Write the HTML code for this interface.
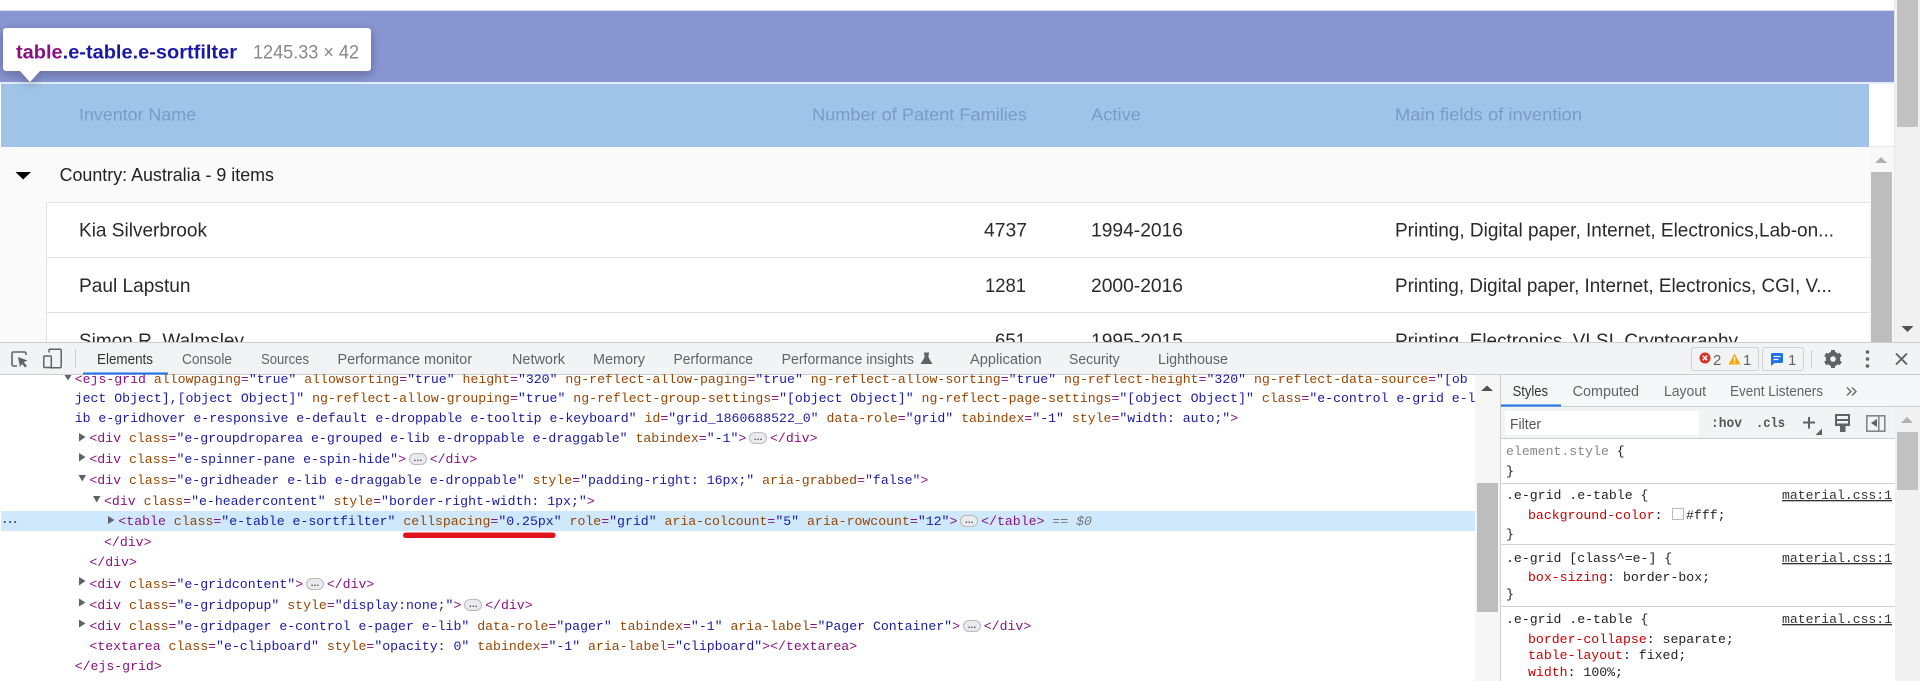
<!DOCTYPE html>
<html><head><meta charset="utf-8"><style>
html,body{margin:0;padding:0;background:#fff}
body{width:1920px;height:681px;overflow:hidden;position:relative;font-family:"Liberation Sans",sans-serif}
svg{position:absolute;left:0;top:0}
.h{font:17.5px "Liberation Sans",sans-serif;fill:#7a9bc2}
.r{font:19.5px "Liberation Sans",sans-serif;fill:#2a2a2a}
.tb{font:15px "Liberation Sans",sans-serif;fill:#5f6368}
#code{position:absolute;left:0;top:374px;width:1475px;height:307px;overflow:hidden}
.l{position:absolute;white-space:pre;font:13.2px/16px "Liberation Mono",monospace;color:#1a1aa6}
.t{color:#881280}.a{color:#994500}.v{color:#1a1aa6}
.p{display:inline-block;width:3ch;height:12px;position:relative;vertical-align:-2px}
.p:before{content:"\2026";position:absolute;left:3px;right:3px;top:0;height:12px;background:#e8eaed;border:1px solid #bbb;border-radius:7px;box-sizing:border-box;font:bold 9px/8px "Liberation Sans",sans-serif;text-align:center;color:#444}
</style></head><body>
<svg width="1920" height="681" viewBox="0 0 1920 681" xmlns="http://www.w3.org/2000/svg">
<defs><filter id="s" x="-10%" y="-30%" width="120%" height="170%"><feDropShadow dx="0" dy="3" stdDeviation="5" flood-color="#223" flood-opacity=".35"/></filter></defs>
<rect x="0" y="10" width="1894" height="1" fill="#d5dbe8"/>
<rect x="0" y="11" width="1894" height="71" fill="#8996d1"/>
<rect x="0" y="82" width="1894" height="2" fill="#e6edf6"/>
<rect x="1" y="84" width="1868" height="63" fill="#a0c4e8"/>
<text class="h" x="79" y="120.5" textLength="117" lengthAdjust="spacingAndGlyphs">Inventor Name</text>
<text class="h" x="812" y="120.5" textLength="215" lengthAdjust="spacingAndGlyphs">Number of Patent Families</text>
<text class="h" x="1091" y="120.5" textLength="50" lengthAdjust="spacingAndGlyphs">Active</text>
<text class="h" x="1395" y="120.5" textLength="187" lengthAdjust="spacingAndGlyphs">Main fields of invention</text>
<rect x="0" y="147" width="1869" height="196" fill="#fafafa"/>
<path d="M15.5 172H31L23.2 179.5Z" fill="#000"/>
<text x="59.6" y="181" font-family="Liberation Sans" font-size="18" fill="#222" textLength="214.4" lengthAdjust="spacingAndGlyphs">Country: Australia - 9 items</text>
<rect x="46" y="202" width="1823" height="141" fill="#fff"/>
<rect x="46" y="202" width="1" height="141" fill="#e0e0e0"/>
<rect x="46" y="202" width="1823" height="1" fill="#e0e0e0"/>
<rect x="46" y="257" width="1823" height="1" fill="#e0e0e0"/>
<rect x="46" y="312" width="1823" height="1" fill="#e0e0e0"/>
<text class="r" x="79" y="236.5" textLength="128" lengthAdjust="spacingAndGlyphs">Kia Silverbrook</text>
<text class="r" x="984" y="236.5" textLength="43" lengthAdjust="spacingAndGlyphs">4737</text>
<text class="r" x="1091" y="236.5" textLength="92" lengthAdjust="spacingAndGlyphs">1994-2016</text>
<text class="r" x="1395" y="236.5" textLength="439" lengthAdjust="spacingAndGlyphs">Printing, Digital paper, Internet, Electronics,Lab-on...</text>
<text class="r" x="79" y="292" textLength="111.5" lengthAdjust="spacingAndGlyphs">Paul Lapstun</text>
<text class="r" x="985" y="292" textLength="41" lengthAdjust="spacingAndGlyphs">1281</text>
<text class="r" x="1091" y="292" textLength="92" lengthAdjust="spacingAndGlyphs">2000-2016</text>
<text class="r" x="1395" y="292" textLength="437" lengthAdjust="spacingAndGlyphs">Printing, Digital paper, Internet, Electronics, CGI, V...</text>
<text class="r" x="79" y="347" textLength="165" lengthAdjust="spacingAndGlyphs">Simon R. Walmsley</text>
<text class="r" x="995" y="347" textLength="31" lengthAdjust="spacingAndGlyphs">651</text>
<text class="r" x="1091" y="347" textLength="92" lengthAdjust="spacingAndGlyphs">1995-2015</text>
<text class="r" x="1395" y="347" textLength="343" lengthAdjust="spacingAndGlyphs">Printing, Electronics, VLSI, Cryptography</text>
<rect x="1869" y="146" width="25" height="197" fill="#f8f8f8"/>
<rect x="1869" y="146" width="25" height="1" fill="#e8e8e8"/>
<rect x="1871" y="172" width="21" height="171" fill="#bdbdbd"/>
<path d="M1875 163H1887L1881 157Z" fill="#b0b0b0"/>
<rect x="1894" y="0" width="1" height="343" fill="#e8e8e8"/>
<rect x="1895" y="0" width="25" height="343" fill="#f1f1f1"/>
<rect x="1897" y="0" width="21" height="127" fill="#c1c1c1"/>
<path d="M1901.5 326H1913.5L1907.5 332Z" fill="#505050"/>
<g filter="url(#s)"><path d="M6 28H368a3 3 0 0 1 3 3V68a3 3 0 0 1-3 3H40L30 82L20 71H6a3 3 0 0 1-3-3V31a3 3 0 0 1 3-3Z" fill="#fff"/></g>
<text x="16" y="58.5" font-family="Liberation Sans" font-weight="700" font-size="19" fill="#1a1aa6" textLength="221" lengthAdjust="spacingAndGlyphs"><tspan fill="#881280">table</tspan>.e-table.e-sortfilter</text>
<text x="253" y="58.5" font-family="Liberation Sans" font-size="19.5" fill="#888" textLength="106" lengthAdjust="spacingAndGlyphs">1245.33 × 42</text>
<!-- devtools base -->
<rect x="0" y="343" width="1920" height="338" fill="#fff"/>
<rect x="0" y="342" width="1920" height="1" fill="#cbcdd1"/>
<rect x="0" y="343" width="1920" height="31" fill="#f1f3f4"/>
<rect x="0" y="374" width="1920" height="1" fill="#cbcdd1"/>
<path d="M26 355V353.5a1.5 1.5 0 0 0-1.5-1.5H13.5a1.5 1.5 0 0 0-1.5 1.5V364.5a1.5 1.5 0 0 0 1.5 1.5H17" fill="none" stroke="#5f6368" stroke-width="1.6"/>
<path d="M18 357L27.5 360.5L23.8 362.3L27 366L25 367.5L22 363.8L20 367Z" fill="#5f6368"/>
<path d="M49 352.5V350.5a1.2 1.2 0 0 1 1.2-1.2H60a1.2 1.2 0 0 1 1.2 1.2V366.5a1.2 1.2 0 0 1-1.2 1.2H50" fill="none" stroke="#5f6368" stroke-width="1.5"/>
<rect x="43.8" y="356" width="7.5" height="11.5" rx="1" fill="none" stroke="#5f6368" stroke-width="1.5"/>
<rect x="75" y="349" width="1" height="19" fill="#cbcdd1"/>
<text class="tb" x="97" y="364" textLength="56" lengthAdjust="spacingAndGlyphs" style="fill:#333">Elements</text>
<rect x="83" y="372.5" width="85" height="2" fill="#1a73e8"/>
<text class="tb" x="182" y="364" textLength="50" lengthAdjust="spacingAndGlyphs">Console</text>
<text class="tb" x="261" y="364" textLength="48" lengthAdjust="spacingAndGlyphs">Sources</text>
<text class="tb" x="337.5" y="364" textLength="134.5" lengthAdjust="spacingAndGlyphs">Performance monitor</text>
<text class="tb" x="512" y="364" textLength="53" lengthAdjust="spacingAndGlyphs">Network</text>
<text class="tb" x="593" y="364" textLength="52" lengthAdjust="spacingAndGlyphs">Memory</text>
<text class="tb" x="673.5" y="364" textLength="79.5" lengthAdjust="spacingAndGlyphs">Performance</text>
<text class="tb" x="781.6" y="364" textLength="132.4" lengthAdjust="spacingAndGlyphs">Performance insights</text>
<path d="M924 352.5H929V354.5H928.5V357.5L932.5 364H920.5L924.5 357.5V354.5H924Z" fill="#5f6368"/>
<text class="tb" x="970" y="364" textLength="71.6" lengthAdjust="spacingAndGlyphs">Application</text>
<text class="tb" x="1069" y="364" textLength="50.6" lengthAdjust="spacingAndGlyphs">Security</text>
<text class="tb" x="1158" y="364" textLength="70" lengthAdjust="spacingAndGlyphs">Lighthouse</text>
<rect x="1691.5" y="347.5" width="67" height="23" rx="2" fill="#f1f3f4" stroke="#d0d2d5"/>
<circle cx="1705" cy="358" r="5.5" fill="#d93025"/>
<path d="M1702.8 355.8L1707.2 360.2M1707.2 355.8L1702.8 360.2" stroke="#fff" stroke-width="1.4"/>
<text class="tb" x="1713" y="365">2</text>
<path d="M1734.5 353.5L1740.5 364.5H1728.5Z" fill="#f9ab00"/>
<rect x="1733.9" y="357" width="1.3" height="4" fill="#fff"/><rect x="1733.9" y="362" width="1.3" height="1.3" fill="#fff"/>
<text class="tb" x="1743" y="365">1</text>
<rect x="1762.5" y="347.5" width="41" height="23" rx="2" fill="#f1f3f4" stroke="#d0d2d5"/>
<path d="M1772.5 353H1781.5a1.5 1.5 0 0 1 1.5 1.5V361.5a1.5 1.5 0 0 1-1.5 1.5H1774.5L1771 366V354.5a1.5 1.5 0 0 1 1.5-1.5Z" fill="#1a73e8"/>
<path d="M1773.5 356.5H1780.5M1773.5 359.5H1778.5" stroke="#fff" stroke-width="1.2"/>
<text class="tb" x="1788" y="365">1</text>
<rect x="1811" y="350" width="1" height="18" fill="#cbcdd1"/>
<g fill="#5f6368" transform="translate(1833 359)">
<circle r="5" fill="none" stroke="#5f6368" stroke-width="4.4"/>
<rect x="-2" y="-9" width="4" height="4"/><rect x="-2" y="5" width="4" height="4"/>
<rect x="-2" y="-9" width="4" height="4" transform="rotate(60)"/><rect x="-2" y="5" width="4" height="4" transform="rotate(60)"/>
<rect x="-2" y="-9" width="4" height="4" transform="rotate(120)"/><rect x="-2" y="5" width="4" height="4" transform="rotate(120)"/>
</g>
<circle cx="1867.5" cy="352" r="1.8" fill="#5f6368"/><circle cx="1867.5" cy="359" r="1.8" fill="#5f6368"/><circle cx="1867.5" cy="366" r="1.8" fill="#5f6368"/>
<path d="M1896 353.5L1907 364.5M1907 353.5L1896 364.5" stroke="#5f6368" stroke-width="1.9" fill="none"/>
<!-- elements scrollbar -->
<rect x="1475" y="375" width="25" height="306" fill="#f6f6f6"/>
<rect x="1477" y="483" width="21" height="129" fill="#bdbdbd"/>
<path d="M1481 391H1493L1487 385.5Z" fill="#505050"/>
<rect x="1500" y="375" width="1" height="306" fill="#cbcdd1"/>
<!-- sidebar -->
<rect x="1501" y="375" width="419" height="31" fill="#f6f7f8"/>
<rect x="1501" y="406" width="419" height="1" fill="#cbcdd1"/>
<text class="tb" x="1512.6" y="396" textLength="35.4" lengthAdjust="spacingAndGlyphs" style="fill:#333">Styles</text>
<rect x="1501" y="404.5" width="60" height="2" fill="#1a73e8"/>
<text class="tb" x="1572.6" y="396" textLength="66.4" lengthAdjust="spacingAndGlyphs">Computed</text>
<text class="tb" x="1664" y="396" textLength="42" lengthAdjust="spacingAndGlyphs">Layout</text>
<text class="tb" x="1730" y="396" textLength="93" lengthAdjust="spacingAndGlyphs">Event Listeners</text>
<path d="M1847 387.5L1851 391.5L1847 395.5M1852 387.5L1856 391.5L1852 395.5" fill="none" stroke="#5f6368" stroke-width="1.3"/>
<rect x="1501" y="407" width="394" height="31" fill="#f1f3f4"/>
<rect x="1501" y="438" width="394" height="1" fill="#cbcdd1"/>
<rect x="1505" y="411" width="194" height="24" fill="#fff"/>
<text class="tb" x="1510" y="429" textLength="31" lengthAdjust="spacingAndGlyphs" style="fill:#555">Filter</text>
<text x="1711" y="427" font-family="Liberation Mono" font-weight="700" font-size="14" fill="#555" textLength="31" lengthAdjust="spacingAndGlyphs">:hov</text>
<text x="1756" y="427" font-family="Liberation Mono" font-weight="700" font-size="14" fill="#555" textLength="29" lengthAdjust="spacingAndGlyphs">.cls</text>
<path d="M1803 422.5H1815M1809 417V428.5" stroke="#5f6368" stroke-width="2"/>
<path d="M1822 428.5V435H1815.5Z" fill="#5f6368"/>
<path d="M1835 414H1850V426H1845.5V432H1840V426H1835Z" fill="#5f6368"/>
<rect x="1837" y="416" width="11" height="3" fill="#f1f3f4"/><rect x="1837" y="421" width="11" height="2.5" fill="#f1f3f4"/>
<rect x="1866.8" y="415.8" width="18" height="15.4" fill="none" stroke="#80868b" stroke-width="1.6"/>
<rect x="1878" y="415.5" width="1.6" height="16" fill="#80868b"/>
<path d="M1877 419V427L1871 423Z" fill="#5f6368"/>
<rect x="1895" y="407" width="25" height="274" fill="#f1f1f1"/>
<path d="M1901 423H1913L1907 417Z" fill="#b0b0b0"/>
<rect x="1897" y="432" width="21" height="58" fill="#c1c1c1"/>
<rect x="1501" y="483" width="394" height="1" fill="#d0d0d0"/>
<rect x="1501" y="544" width="394" height="1" fill="#d0d0d0"/>
<rect x="1501" y="606" width="394" height="1" fill="#d0d0d0"/>
<g font-family="Liberation Mono" font-size="13.2" fill="#222">
<text x="1506" y="455" fill="#888">element.style <tspan fill="#222">{</tspan></text>
<text x="1506" y="475">}</text>
<text x="1506" y="499">.e-grid .e-table {</text>
<text x="1528" y="519" fill="#c80000">background-color<tspan fill="#222">:</tspan></text>
<rect x="1672.5" y="508.5" width="11" height="11" fill="#fff" stroke="#bbb"/>
<text x="1686" y="519">#fff;</text>
<text x="1506" y="538">}</text>
<text x="1506" y="562">.e-grid [class^=e-] {</text>
<text x="1528" y="581" fill="#c80000">box-sizing<tspan fill="#222">: border-box;</tspan></text>
<text x="1506" y="598">}</text>
<text x="1506" y="623">.e-grid .e-table {</text>
<text x="1528" y="643" fill="#c80000">border-collapse<tspan fill="#222">: separate;</tspan></text>
<text x="1528" y="659" fill="#c80000">table-layout<tspan fill="#222">: fixed;</tspan></text>
<text x="1528" y="676" fill="#c80000">width<tspan fill="#222">: 100%;</tspan></text>
<g fill="#333" text-decoration="underline">
<text x="1782" y="499" textLength="110" lengthAdjust="spacingAndGlyphs">material.css:1</text>
<text x="1782" y="562" textLength="110" lengthAdjust="spacingAndGlyphs">material.css:1</text>
<text x="1782" y="623" textLength="110" lengthAdjust="spacingAndGlyphs">material.css:1</text>
</g>
</g>
<!-- selected row -->
<rect x="1" y="511" width="1474" height="20" fill="#cfe8fc"/>
<text x="3" y="523" font-family="Liberation Sans" font-weight="700" font-size="13" fill="#555" textLength="14" lengthAdjust="spacing">...</text>
<rect x="403" y="532.5" width="152.5" height="5.5" rx="2.7" fill="#e0141c"/>
<!-- arrows -->
<g fill="#5f6368">
<path d="M64.5 375H71.5L68 380.5Z"/>
<path d="M79 433V441.5L85.500 437Z"/>
<path d="M79 453V461.500L85.500 457Z"/>
<path d="M78.500 475H86L82.300 481.500Z"/>
<path d="M93 496H100.500L96.700 502.500Z"/>
<path d="M108 516V524L114.500 520Z"/>
<path d="M79 577V585.500L85.500 581Z"/>
<path d="M79 598.500V606.500L85.500 602.500Z"/>
<path d="M79 619.500V627.500L85.500 623.500Z"/>
</g>
</svg>
<div id="code">
<div class="l" style="left:74.7px;top:-2.5px"><span class="t">&lt;ejs-grid</span> <span class="a">allowpaging</span><span class="t">=</span>"true" <span class="a">allowsorting</span><span class="t">=</span>"true" <span class="a">height</span><span class="t">=</span>"320" <span class="a">ng-reflect-allow-paging</span><span class="t">=</span>"true" <span class="a">ng-reflect-allow-sorting</span><span class="t">=</span>"true" <span class="a">ng-reflect-height</span><span class="t">=</span>"320" <span class="a">ng-reflect-data-source</span><span class="t">=</span>"[ob</div>
<div class="l" style="left:74.7px;top:16.5px">ject Object],[object Object]" <span class="a">ng-reflect-allow-grouping</span><span class="t">=</span>"true" <span class="a">ng-reflect-group-settings</span><span class="t">=</span>"[object Object]" <span class="a">ng-reflect-page-settings</span><span class="t">=</span>"[object Object]" <span class="a">class</span><span class="t">=</span>"e-control e-grid e-l</div>
<div class="l" style="left:74.7px;top:36.5px">ib e-gridhover e-responsive e-default e-droppable e-tooltip e-keyboard" <span class="a">id</span><span class="t">=</span>"grid_1860688522_0" <span class="a">data-role</span><span class="t">=</span>"grid" <span class="a">tabindex</span><span class="t">=</span>"-1" <span class="a">style</span><span class="t">=</span>"width: auto;"<span class="t">&gt;</span></div>
<div class="l" style="left:89.4px;top:57.2px"><span class="t">&lt;div</span> <span class="a">class</span><span class="t">=</span>"e-groupdroparea e-grouped e-lib e-droppable e-draggable" <span class="a">tabindex</span><span class="t">=</span>"-1"<span class="t">&gt;</span><span class="p"></span><span class="t">&lt;/div&gt;</span></div>
<div class="l" style="left:89.4px;top:77.5px"><span class="t">&lt;div</span> <span class="a">class</span><span class="t">=</span>"e-spinner-pane e-spin-hide"<span class="t">&gt;</span><span class="p"></span><span class="t">&lt;/div&gt;</span></div>
<div class="l" style="left:89.4px;top:98.5px"><span class="t">&lt;div</span> <span class="a">class</span><span class="t">=</span>"e-gridheader e-lib e-draggable e-droppable" <span class="a">style</span><span class="t">=</span>"padding-right: 16px;" <span class="a">aria-grabbed</span><span class="t">=</span>"false"<span class="t">&gt;</span></div>
<div class="l" style="left:104px;top:119.5px"><span class="t">&lt;div</span> <span class="a">class</span><span class="t">=</span>"e-headercontent" <span class="a">style</span><span class="t">=</span>"border-right-width: 1px;"<span class="t">&gt;</span></div>
<div class="l" style="left:118.4px;top:139.5px"><span class="t">&lt;table</span> <span class="a">class</span><span class="t">=</span>"e-table e-sortfilter" <span class="a">cellspacing</span><span class="t">=</span>"0.25px" <span class="a">role</span><span class="t">=</span>"grid" <span class="a">aria-colcount</span><span class="t">=</span>"5" <span class="a">aria-rowcount</span><span class="t">=</span>"12"<span class="t">&gt;</span><span class="p"></span><span class="t">&lt;/table&gt;</span><span style="color:#777"> == <i>$0</i></span></div>
<div class="l" style="left:104px;top:161.2px"><span class="t">&lt;/div&gt;</span></div>
<div class="l" style="left:89.4px;top:181.2px"><span class="t">&lt;/div&gt;</span></div>
<div class="l" style="left:89.4px;top:202.5px"><span class="t">&lt;div</span> <span class="a">class</span><span class="t">=</span>"e-gridcontent"<span class="t">&gt;</span><span class="p"></span><span class="t">&lt;/div&gt;</span></div>
<div class="l" style="left:89.4px;top:223.5px"><span class="t">&lt;div</span> <span class="a">class</span><span class="t">=</span>"e-gridpopup" <span class="a">style</span><span class="t">=</span>"display:none;"<span class="t">&gt;</span><span class="p"></span><span class="t">&lt;/div&gt;</span></div>
<div class="l" style="left:89.4px;top:244.5px"><span class="t">&lt;div</span> <span class="a">class</span><span class="t">=</span>"e-gridpager e-control e-pager e-lib" <span class="a">data-role</span><span class="t">=</span>"pager" <span class="a">tabindex</span><span class="t">=</span>"-1" <span class="a">aria-label</span><span class="t">=</span>"Pager Container"<span class="t">&gt;</span><span class="p"></span><span class="t">&lt;/div&gt;</span></div>
<div class="l" style="left:89.4px;top:264.5px"><span class="t">&lt;textarea</span> <span class="a">class</span><span class="t">=</span>"e-clipboard" <span class="a">style</span><span class="t">=</span>"opacity: 0" <span class="a">tabindex</span><span class="t">=</span>"-1" <span class="a">aria-label</span><span class="t">=</span>"clipboard"<span class="t">&gt;&lt;/textarea&gt;</span></div>
<div class="l" style="left:74.7px;top:284.5px"><span class="t">&lt;/ejs-grid&gt;</span></div>
</div>
</body></html>
